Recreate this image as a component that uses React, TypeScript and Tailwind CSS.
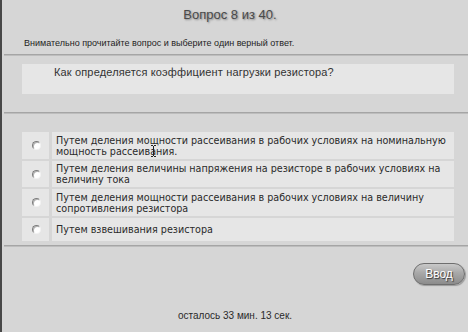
import React from 'react'

const answers = [
  { text: 'Путем деления мощности рассеивания в рабочих условиях на номинальную мощность рассеивания.', h: 'h-[27px]' },
  { text: 'Путем деления величины напряжения на резисторе в рабочих условиях на величину тока', h: 'h-[26px]' },
  { text: 'Путем деления мощности рассеивания в рабочих условиях на величину сопротивления резистора', h: 'h-[27px]' },
  { text: 'Путем взвешивания резистора', h: 'h-[23px]' },
]

function Radio() {
  return (
    <span className="block h-[9px] w-[9px] rounded-full border border-t-[#7c7c7c] border-l-[#7c7c7c] border-b-[#f2f2f2] border-r-[#f2f2f2] bg-white shadow-[inset_1px_1px_0_#b0b0b0]" />
  )
}

function Separator() {
  return <div className="ml-[2px] h-[2px] bg-[#a5a5a5] border-b border-[#bdbdbd]" />
}

export default function App() {
  return (
    <div className="relative flex h-[332px] w-[468px] flex-col overflow-hidden border-l-2 border-[#484848] bg-[#d6d6d6] font-['Liberation_Sans',Arial,sans-serif]">
      <div className="h-[30px] pt-[7px] pr-[10px] text-center text-[13px] leading-[16px] text-[#4a4a4a] [text-shadow:1px_1px_2px_#808080]">
        Вопрос 8 из 40.
      </div>
      <div className="h-[24px] pt-[8px] pl-[22px] text-[9px] leading-[11px] text-[#1e1e1e]">
        Внимательно прочитайте вопрос и выберите один верный ответ.
      </div>
      <Separator />
      <div className="ml-[20px] mt-[8px] h-[30px] w-[432px] bg-[#e6e6e6] pt-[2px] pl-[32px] text-[11px] leading-[13px] tracking-[0.15px] text-[#333]">
        Как определяется коэффициент нагрузки резистора?
      </div>
      <div className="mt-[18px]">
        <Separator />
      </div>
      <div className="ml-[20px] mt-[18px] flex w-[432px] flex-col gap-[2px]">
        {answers.map((a, i) => (
          <div key={i} className={`flex gap-[3px] ${a.h}`}>
            <div className="flex w-[27px] items-center justify-center bg-[#e6e6e6] pl-[1px]">
              <Radio />
            </div>
            <div className="flex flex-1 items-center bg-[#e6e6e6] pl-[4px] pr-[4px] font-['DejaVu_Sans',Verdana,sans-serif] text-[9.6px] leading-[11px] text-[#2a2a2a]">
              {a.text}
            </div>
          </div>
        ))}
      </div>
      <div className="mt-[4px]">
        <Separator />
      </div>
      <div className="mt-[16px] flex justify-end pr-[3px]">
        <button className="h-[22px] w-[52px] rounded-full border border-[#6e6e6e] bg-[linear-gradient(to_bottom,#c9c9c9,#a8a8a8_45%,#8c8c8c)] text-[12px] leading-[20px] text-white shadow-[1px_1px_1px_#9a9a9a] [text-shadow:1px_1px_1px_#333]">
          Ввод
        </button>
      </div>
      <div className="mt-[25px] text-center text-[10px] leading-[11px] text-[#2a2a2a]">
        осталось 33 мин. 13 сек.
      </div>
      <svg className="absolute left-[148px] top-[145px]" width="7" height="12" viewBox="0 0 7 12">
        <path d="M1 0.5h2M4 0.5h2M3.5 1v10M1 11.5h2M4 11.5h2" stroke="#222" strokeWidth="1" fill="none" />
      </svg>
    </div>
  )
}
